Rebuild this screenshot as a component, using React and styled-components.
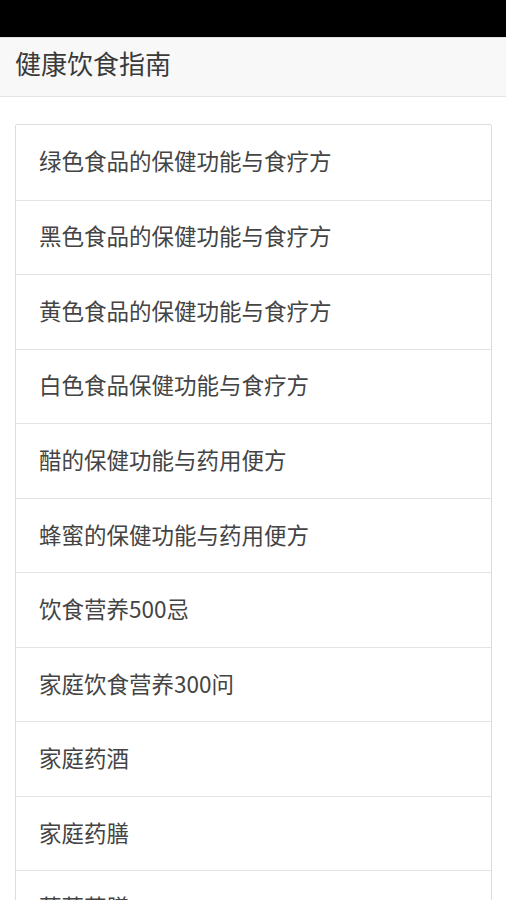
import React from "react";
import styled, { createGlobalStyle } from "styled-components";

const GlobalStyle = createGlobalStyle`
  html, body {
    margin: 0;
    padding: 0;
    background: #ffffff;
    font-family: "Noto Sans CJK SC", "Noto Sans", "Liberation Sans", sans-serif;
  }
  * { box-sizing: border-box; }
`;

const Page = styled.div`
  width: 506px;
  height: 900px;
  overflow: hidden;
  background: #fff;
`;

const StatusBar = styled.div`
  height: 37px;
  background: #000;
`;

const Header = styled.header`
  height: 60px;
  background: #f8f8f8;
  border-top: 1px solid #e0e0e0;
  border-bottom: 1px solid #e4e4e4;
  display: flex;
  align-items: center;
  padding-left: 15px;
  padding-bottom: 9px;
`;

const Title = styled.h1`
  margin: 0;
  font-size: 26px;
  font-weight: 400;
  color: #3a3a3a;
  line-height: 1;
`;

const List = styled.ul`
  list-style: none;
  margin: 27px 14px 0 15px;
  padding: 0;
  border: 1px solid #dddddd;
  border-radius: 2px;
`;

const Item = styled.li`
  height: 74.55px;
  display: flex;
  align-items: center;
  padding-left: 23px;
  padding-bottom: 4px;
  font-size: 22.5px;
  color: #444;
  border-top: ${(p) => (p.$first ? "none" : "1px solid #e3e3e3")};
`;

const items = [
  "绿色食品的保健功能与食疗方",
  "黑色食品的保健功能与食疗方",
  "黄色食品的保健功能与食疗方",
  "白色食品保健功能与食疗方",
  "醋的保健功能与药用便方",
  "蜂蜜的保健功能与药用便方",
  "饮食营养500忌",
  "家庭饮食营养300问",
  "家庭药酒",
  "家庭药膳",
  "蔬菜药膳",
];

export default function App() {
  return (
    <Page>
      <GlobalStyle />
      <StatusBar />
      <Header>
        <Title>健康饮食指南</Title>
      </Header>
      <List>
        {items.map((t, i) => (
          <Item key={i} $first={i === 0}>
            {t}
          </Item>
        ))}
      </List>
    </Page>
  );
}
